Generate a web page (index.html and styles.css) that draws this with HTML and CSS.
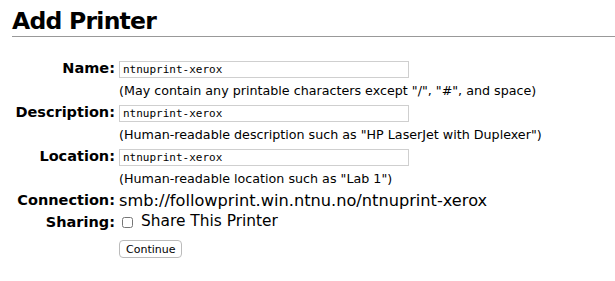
FILE: index.html
```html
<!DOCTYPE html>
<html lang="en">
<head>
    <meta charset="UTF-8">
    <title>Add Printer</title>
    <link rel="stylesheet" href="styles.css">
</head>
<body>
    <h2 class="title">Add Printer</h2>
    <form class="add-form">
        <table class="fields">
            <tr>
                <th>Name:</th>
                <td><input type="text" class="field" value="ntnuprint-xerox"></td>
            </tr>
            <tr>
                <th></th>
                <td class="hint">(May contain any printable characters except "/", "#", and space)</td>
            </tr>
            <tr>
                <th>Description:</th>
                <td><input type="text" class="field" value="ntnuprint-xerox"></td>
            </tr>
            <tr>
                <th></th>
                <td class="hint">(Human-readable description such as "HP LaserJet with Duplexer")</td>
            </tr>
            <tr>
                <th>Location:</th>
                <td><input type="text" class="field" value="ntnuprint-xerox"></td>
            </tr>
            <tr>
                <th></th>
                <td class="hint">(Human-readable location such as "Lab 1")</td>
            </tr>
            <tr>
                <th>Connection:</th>
                <td class="value">smb://followprint.win.ntnu.no/ntnuprint-xerox</td>
            </tr>
            <tr>
                <th>Sharing:</th>
                <td class="value"><label class="share"><input type="checkbox" class="check"> Share This Printer</label></td>
            </tr>
            <tr>
                <th></th>
                <td class="actions"><input type="submit" class="btn" value="Continue"></td>
            </tr>
        </table>
    </form>
</body>
</html>
```

FILE: styles.css
```css
body {
    font-family: "DejaVu Sans", Verdana, sans-serif;
    margin: 0;
    padding: 0 0 0 12px;
    background: #fff;
    color: #000;
}
.title {
    font-size: 23.5px;
    letter-spacing: -0.75px;
    font-weight: bold;
    margin: 0;
    padding: 9px 0 3px;
    line-height: 24px;
    border-bottom: 1px solid #999;
}
.add-form {
    margin: 0;
    padding-top: 20px;
}
.fields {
    border-collapse: collapse;
}
.fields th {
    width: 103px;
    text-align: right;
    font-size: 14.5px;
    padding: 0 4px 0 0;
    height: 22px;
    white-space: nowrap;
    vertical-align: middle;
}
.fields td {
    padding: 0;
    height: 22px;
    white-space: nowrap;
    vertical-align: middle;
}
.field {
    font-family: "DejaVu Sans Mono", monospace;
    font-size: 11px;
    width: 290px;
    height: 17px;
    box-sizing: border-box;
    border: 1px solid #cfcfcf;
    padding: 0 3px;
    margin: 0;
}
.hint {
    font-size: 12.7px;
}
.value {
    font-size: 16.2px;
}
.share {
    display: inline-flex;
    align-items: center;
    gap: 8px;
    font-size: 15.4px;
}
.check {
    width: 11px;
    height: 11px;
    margin: 2px 0 0 3px;
}
.actions {
    padding-top: 4px !important;
}
.btn {
    font-family: "DejaVu Sans", sans-serif;
    font-size: 11px;
    background: #fff;
    border: 1px solid #bbb;
    border-radius: 4px;
    padding: 1px 6px;
    height: 18px;
}
```
